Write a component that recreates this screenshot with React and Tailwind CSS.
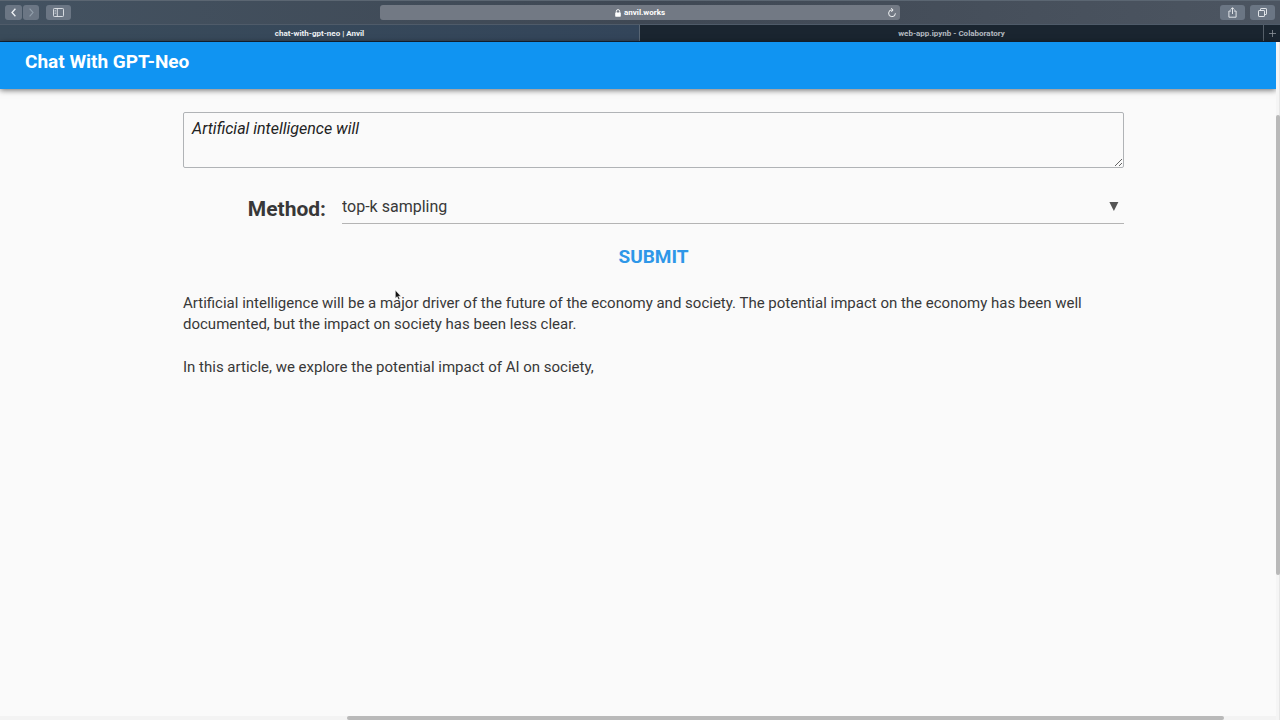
import { useState } from "react";

function ToolbarButton({ label, className, children }) {
  return (
    <button
      type="button"
      aria-label={label}
      className={`flex h-[15px] items-center justify-center rounded-[3px] bg-[#6b7684] ${className}`}
    >
      {children}
    </button>
  );
}

function Toolbar() {
  return (
    <div className="flex h-[25px] items-center border-y border-t-[#5b6672] border-b-[#4f5b69] bg-linear-to-r from-[#435261] via-[#3f4854] to-[#4c5561] px-[5px]">
      <div className="flex flex-1 items-center">
        <ToolbarButton label="Back" className="w-[17px]">
          <svg width="5" height="9" viewBox="0 0 5 9" fill="none" stroke="#eef1f4" strokeWidth="1.3">
            <path d="M4.4 .7 1 4.5l3.4 3.8" />
          </svg>
        </ToolbarButton>
        <ToolbarButton label="Forward" className="ml-px w-[16px]">
          <svg width="5" height="9" viewBox="0 0 5 9" fill="none" stroke="#93a0ac" strokeWidth="1.1">
            <path d="M.6 .7 4 4.5.6 8.3" />
          </svg>
        </ToolbarButton>
        <ToolbarButton label="Sidebar" className="ml-[7px] w-[25px]">
          <svg width="11" height="9" viewBox="0 0 11 9" fill="none" stroke="#e3e7eb" strokeWidth=".9">
            <rect x=".5" y=".5" width="10" height="8" rx=".8" />
            <path d="M4.3 .5v8" />
            <path d="M1.6 2.4h1.5M1.6 3.9h1.5M1.6 5.4h1.5" strokeWidth=".6" />
          </svg>
        </ToolbarButton>
      </div>
      <div className="flex h-[15px] w-[520px] items-center rounded-[3px] bg-[#727984] px-1">
        <span className="flex flex-1 items-center justify-center gap-[3px] pt-px pl-2 text-[8px] leading-3 font-bold text-white">
          <svg width="6" height="8" viewBox="0 0 6 8">
            <path d="M1.3 4V2.3a1.7 1.7 0 0 1 3.4 0V4" fill="none" stroke="#fff" strokeWidth=".9" />
            <rect x=".2" y="3.5" width="5.6" height="4.2" rx=".6" fill="#fff" />
          </svg>
          anvil.works
        </span>
        <button type="button" aria-label="Reload">
          <svg width="8" height="10" viewBox="0 0 8 10" fill="none" stroke="#f0f2f4" strokeWidth="1">
            <path d="M4.4 1.9A3.4 3.4 0 1 0 7.4 5.3" />
            <path d="M3.2 .2 5.1 1.9 3.4 3.9" />
          </svg>
        </button>
      </div>
      <div className="flex flex-1 items-center justify-end gap-[5px]">
        <ToolbarButton label="Share" className="w-[25px]">
          <svg width="9" height="11" viewBox="0 0 9 11" fill="none" stroke="#eef1f4" strokeWidth=".9">
            <path d="M3 4H.9v6.2h7.2V4H6M4.5 7V.8M2.7 2.5 4.5.7l1.8 1.8" />
          </svg>
        </ToolbarButton>
        <ToolbarButton label="Show tabs" className="w-[25px]">
          <svg width="9" height="9" viewBox="0 0 9 9" fill="none" stroke="#eef1f4" strokeWidth=".9">
            <rect x=".5" y="2.5" width="6" height="6" rx=".6" />
            <path d="M2.5 2.5V1.1a.6.6 0 0 1 .6-.6h4.8a.6.6 0 0 1 .6.6v4.8a.6.6 0 0 1-.6.6H6.5" />
          </svg>
        </ToolbarButton>
      </div>
    </div>
  );
}

function TabBar() {
  return (
    <div className="grid h-[17px] grid-cols-2 border-b border-[#152538] bg-[#1a2530] text-[8px] leading-[14px] font-bold">
      <button type="button" className="border-r border-[#596674] bg-linear-to-r from-[#3a4b5a] to-[#33455a] pt-[2px] text-[#eef1f4]">
        chat-with-gpt-neo | Anvil
      </button>
      <div className="flex">
        <button type="button" className="flex-1 pt-[2px] text-[#b4bac0]">
          web-app.ipynb - Colaboratory
        </button>
        <button type="button" aria-label="New tab" className="flex w-[17px] items-center justify-center border-l border-[#56606a]">
          <svg width="7" height="7" viewBox="0 0 7 7" stroke="#8b939b" strokeWidth=".8">
            <path d="M3.5 0v7M0 3.5h7" />
          </svg>
        </button>
      </div>
    </div>
  );
}

export default function App() {
  const [prompt, setPrompt] = useState("Artificial intelligence will");
  return (
    <div className="flex min-h-screen flex-col bg-[#fafafa] font-['Roboto',sans-serif] text-[#383838]">
      <div>
        <Toolbar />
        <TabBar />
      </div>
      <div className="flex flex-1">
        <div className="flex min-w-0 flex-1 flex-col">
          <header className="flex h-[47px] items-center bg-[#1094f2] px-[25px] pb-[7px] shadow-[0_1px_6px_rgba(0,0,0,0.6)]">
            <h1 className="text-[19px] leading-6 font-bold text-white">Chat With GPT-Neo</h1>
          </header>
          <main className="flex-1 pt-[23px] pr-[152px] pl-[183px]">
            <form onSubmit={(e) => e.preventDefault()}>
              <textarea
                aria-label="Prompt"
                value={prompt}
                onChange={(e) => setPrompt(e.target.value)}
                className="block h-14 w-full resize-y rounded-[2px] border border-[#b0b3b6] px-2 py-[5px] text-[16px] leading-[21px] text-[#222222] italic outline-none"
              />
              <div className="mt-[23px] flex items-start gap-4">
                <label htmlFor="method" className="w-[143px] pt-[6px] text-right text-[21px] leading-6 font-bold">
                  Method:
                </label>
                <div className="relative flex-1">
                  <select
                    id="method"
                    className="block h-[33px] w-full appearance-none border-b border-[#b4b4b4] pb-px text-[16px] leading-6 outline-none"
                  >
                    <option>top-k sampling</option>
                    <option>beam search</option>
                    <option>greedy search</option>
                  </select>
                  <svg width="10" height="9" viewBox="0 0 10 9" className="pointer-events-none absolute top-[11px] right-[5px]">
                    <path d="M.4 0h9L4.9 9z" fill="#555" />
                  </svg>
                </div>
              </div>
              <div className="mt-[21px] flex justify-center">
                <button type="submit" className="text-[19px] leading-6 font-bold text-[#2e97e8]">
                  SUBMIT
                </button>
              </div>
            </form>
            <div className="mt-6 flex flex-col gap-[22px] text-[15px] leading-[21px]">
              <p>
                Artificial intelligence will be a major driver of the future of the economy and society. The potential
                impact on the economy has been well documented, but the impact on society has been less clear.
              </p>
              <p>In this article, we explore the potential impact of AI on society,</p>
            </div>
          </main>
          <div className="flex h-1 bg-[#f3f3f3]">
            <div className="ml-[27.2%] w-[68.7%] rounded-full bg-[#b9b9b9]" />
          </div>
        </div>
        <div className="flex w-1 flex-col border-r border-[#e6e6e6] bg-[#f5f5f5] pt-[73px]">
          <div className="-mr-px h-[460px] rounded-full bg-[#b9b9b9]" />
        </div>
      </div>
      <svg width="6" height="10" viewBox="0 0 6 10" className="pointer-events-none absolute top-[290px] left-[395px]">
        <path d="M.4.3v7.9l1.8-1.6 1.3 2.9 1.3-.6-1.3-2.7h2.3z" fill="#111" stroke="#fff" strokeWidth=".4" />
      </svg>
    </div>
  );
}
